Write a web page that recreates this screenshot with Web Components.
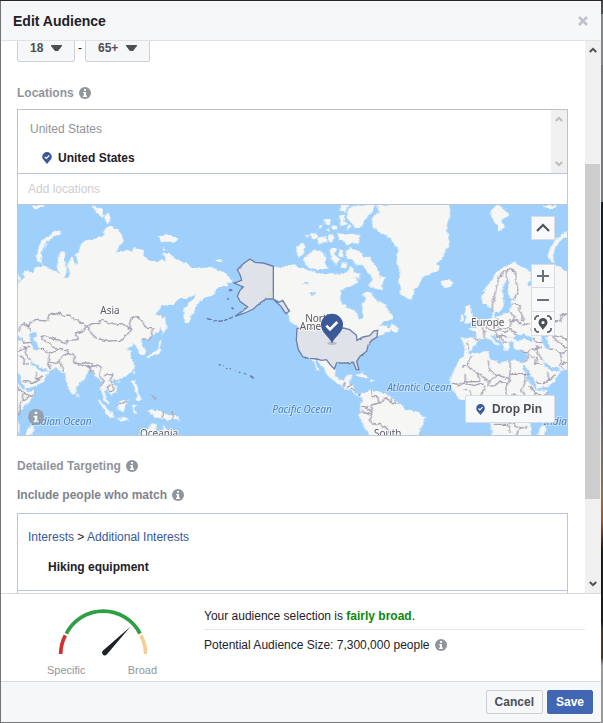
<!DOCTYPE html>
<html lang="en">
<head>
<meta charset="utf-8">
<meta name="viewport" content="width=device-width, initial-scale=1">
<title>Edit Audience</title>
<style>
html, body { margin: 0; height: 100%; }
body {
  box-sizing: border-box;
  padding: 1px 2px 1px 1px;
  font: 12px/16px "Liberation Sans", Arial, sans-serif;
  color: #1d2129;
  background:
    linear-gradient(#2a2528, #2a2528) 0 0 / 100% 1px no-repeat,
    linear-gradient(#737378, #737378) 0 0 / 1px 100% no-repeat,
    linear-gradient(#4b4b50 0 2%, #85868a 2% 9%, #77787b 9% 28%, #141c2e 28% 38%, #4a3d45 50%, #6d6a70 60%, #8a7450 68%, #a8542a 72%, #1a1c1c 76% 86%, #4c3a2c 87% 91%, #98999b 92%) 100% 0 / 2px 100% no-repeat,
    #77787b;
}
</style>
</head>
<body>
<audience-dialog></audience-dialog>
<script>
const define = (name, html, init) => customElements.define(name, class extends HTMLElement {
  constructor() {
    super();
    this.attachShadow({ mode: "open" }).innerHTML = html;
    if (init) init.call(this, this.shadowRoot);
  }
});

define("info-icon", `
<style>:host{display:inline-flex;width:12px;height:12px;flex:none}svg{width:100%;height:100%}</style>
<svg viewBox="0 0 12 12" role="img" aria-label="More information"><circle cx="6" cy="6" r="6" fill="#90949c"/><path d="M5 2h2v1.8H5zM4.2 5H7v3.6h.9V10H4.1V8.600H5V6.300h-.8z" fill="#fff"/></svg>`);

define("pin-icon", `
<style>:host{display:inline-flex;width:10px;height:12px;flex:none}svg{width:100%;height:100%}</style>
<svg viewBox="0 0 10 12" aria-hidden="true"><path d="M5 0a4.800 4.800 0 0 1 4.800 4.800C9.800 7.500 7 9.300 5 12 3 9.300.2 7.500.2 4.800A4.800 4.800 0 0 1 5 0z" fill="#3b5998"/><path d="M2.800 4.900l1.600 1.500L7.300 3.400" fill="none" stroke="#fff" stroke-width="1.300"/></svg>`);

define("section-title", `
<style>
:host{display:flex;align-items:center;gap:5px;height:16px;font-weight:bold;color:var(--tone,#90949c)}
h3{font:inherit;margin:0}
</style><h3><slot></slot></h3><info-icon></info-icon>`);

define("age-select", `
<style>
:host{display:grid;position:relative}
select{appearance:none;height:24px;box-sizing:border-box;border:1px solid #ced0d4;border-radius:2px;background:#f6f7f9;color:#4b4f56;font:bold 12px/16px "Liberation Sans",Arial,sans-serif;padding:0 30px 4px 12px;width:100%}
svg{position:absolute;right:13px;bottom:11px;width:11px;height:6px;pointer-events:none}
</style>
<select></select><svg viewBox="0 0 11 6" aria-hidden="true"><path d="M0 0h11v1L7 6H4L0 1z" fill="#4b4f56"/></svg>`,
function (root) {
  const s = root.querySelector("select");
  s.setAttribute("aria-label", this.getAttribute("label"));
  s.add(new Option(this.getAttribute("value")));
});

define("scroll-track", `
<style>
:host{display:grid;grid-template-rows:18px 1fr 18px;width:16px;background:#f0f0f0;color:#505050}
svg{width:8px;height:6px;place-self:center}
.rail{display:grid;grid-template-rows:var(--rail,1fr)}
.thumb{grid-row:2;background:#cdcdcd;margin-right:1px}
</style>
<svg viewBox="0 0 8 6"><path d="M.8 5L4 1.800 7.200 5" fill="none" stroke="currentColor" stroke-width="2"/></svg>
<div class="rail"></div>
<svg viewBox="0 0 8 6"><path d="M.8 1L4 4.200 7.200 1" fill="none" stroke="currentColor" stroke-width="2"/></svg>`,
function (root) {
  if (this.hasAttribute("thumb")) root.querySelector(".rail").innerHTML = '<div class="thumb"></div>';
});

define("location-picker", `
<style>
:host{display:block;border:1px solid #bdc7dc}
.list{display:grid;grid-template-columns:1fr 16px;height:63px;outline:1px solid #bfc1c6}
.items{display:grid;grid-template-rows:16px 16px;gap:13px;padding:11px 12px 0;align-content:start}
.group{color:#90949c}
.item{display:flex;align-items:center;gap:6px;padding-left:12px;font-weight:bold}
scroll-track{color:#bcbcbc}
input{display:block;box-sizing:border-box;width:100%;height:30px;border:0;padding:0 10px;font:inherit;color:#1d2129;background:#fff;outline:0}
input::placeholder{color:#ccced2;opacity:1}
.field{position:relative;border-top:1px solid #b9c4dc;border-bottom:1px solid #b9c4dc}
</style>
<div class="list"><div class="items"><div class="group">United States</div><div class="item"><pin-icon></pin-icon>United States</div></div><scroll-track></scroll-track></div>
<div class="field"><input type="text" aria-label="Add locations" placeholder="Add locations"></div>
<world-map></world-map>`);

define("world-map", `
<style>
:host{display:block;position:relative;height:230px;overflow:hidden;background:#9fd0fc}
.map{display:block;width:100%;height:100%}
path.land{fill:#f6f6f4}
path.water{fill:#9fd0fc}
path.line{fill:none;stroke:#a5a2b5;stroke-width:4;stroke-linejoin:round}
path.us{fill:#dfe3e9;stroke:#6c7fab;stroke-width:4}
path.isle{fill:#6c7fab;stroke:#6c7fab;stroke-width:3}
path.green{fill:#d6e6d2}
text{font-family:"Noto Sans",sans-serif;font-size:30px;fill:#5c5c6b;stroke:#f8f8f6;stroke-width:6px;paint-order:stroke;text-anchor:middle}
.sea{font-style:italic;fill:#4a83bf;stroke:#c4e1fc}
.tools{position:absolute;top:11px;right:12px;display:grid;grid-template-columns:24px}
button{box-sizing:border-box;height:24px;padding:0;border:1px solid #d9dde3;background:#f8f9fb;color:#4b4f56;display:grid;place-items:center}
.tools button:first-child{margin-bottom:24px}
.tools button:nth-child(n+3){border-top:0}
.tools svg{width:18px;height:18px;fill:none;stroke:currentColor;stroke-width:2}
.tools .step{color:#6c7077}
.drop{position:absolute;right:12px;bottom:12px;height:28px;display:flex;align-items:center;gap:7px;padding:0 12px 0 10px;border-radius:2px;font:bold 12px/16px "Liberation Sans",Arial,sans-serif}
.drop pin-icon{width:9px;height:11px}
.about{position:absolute;left:10px;bottom:10px;width:16px;height:16px;opacity:.8}
.about info-icon{width:16px;height:16px}
</style>
<svg class="map" viewBox="9 6 1647 690" preserveAspectRatio="xMidYMid slice" role="img" aria-label="World map with the United States selected">
<defs>
<filter id="coast" filterUnits="userSpaceOnUse" x="-20" y="-20" width="1720" height="740" color-interpolation-filters="sRGB">
<feTurbulence type="fractalNoise" baseFrequency=".055" numOctaves="3" seed="4"/>
<feDisplacementMap in="SourceGraphic" scale="14" xChannelSelector="R" yChannelSelector="G"/>
</filter>
<filter id="calm" filterUnits="userSpaceOnUse" x="-20" y="-20" width="1720" height="740" color-interpolation-filters="sRGB">
<feTurbulence type="fractalNoise" baseFrequency=".055" numOctaves="2" seed="4"/>
<feDisplacementMap in="SourceGraphic" scale="6" xChannelSelector="R" yChannelSelector="G"/>
</filter>
<g id="old">
<path class="land" d="M-136 290L-131 262-113 240-96 215-76 195-56 183-36 180-23 188-2 196 10 206 14 232-2 240 8 248 16 234 30 222 22 208 40 200 50 208 70 192 85 186 100 195 122 205 132 212 126 195 128 175 131 150 142 143 150 152 149 172 156 190 153 215 146 230 160 224 165 208 158 190 163 170 172 160 178 176 184 186 188 172 182 156 190 144 192 130 215 112 245 106 262 98 276 72 290 68 300 78 324 92 325 112 312 130 306 146 318 148 336 140 352 146 358 134 372 138 390 142 388 160 400 174 418 170 424 178 440 170 452 172 450 160 436 152 465 152 478 166 500 178 515 180 530 195 565 194 570 188 595 195 620 205 640 220 652 230 648 240 636 238 640 252 615 252 605 262 595 276 570 284 558 296 552 292 540 320 530 336 525 350 510 358 505 345 508 318 520 302 538 284 540 274 525 280 515 288 490 288 476 304 440 308 432 322 420 334 440 340 442 360 434 382 415 398 400 412 378 410 385 430 394 444 384 458 374 452 372 440 362 430 356 420 348 432 340 430 334 442 350 446 344 460 358 476 360 490 352 504 340 516 320 524 310 530 296 526 292 534 306 552 304 566 290 578 284 570 276 560 268 566 276 586 284 600 278 604 266 586 258 560 258 535 246 522 236 514 226 504 215 510 208 530 194 542 184 558 180 576 172 578 160 555 152 528 150 508 138 510 125 496 100 500 98 512 84 536 60 550 30 558 36 564 62 560 56 576 42 596 18 620 8 640 8 660 14 662 12 700-106 700-106 670-118 640-128 610-160 600-200 592-218 570-231 545-229 520-211 482-192 458-185 447-190 425-196 405-180 403-150 404-156 390-176 376-150 372-140 362-120 350-106 345-103 325-98 330-100 318-112 312-130 302z"/>
<path class="land" d="M-110 20L-88 8-60 22-56 38-76 50-66 72-82 86-94 62-106 46zM-259 235L-240 230-220 236-224 250-246 256-256 246zM-186 310L-172 304-168 330-160 350-176 362-188 360-178 346-186 330zM-200 335L-190 330-189 350-202 354z"/>
<path class="land" d="M132 82L110 92 88 106 70 130 62 160 68 174 82 182 78 158 84 140 96 118 112 104 136 94zM232 6L258 16 268 34 262 44 240 26zM266 40L278 32 290 50 276 60zM46 8L90 6 84 14 62 16zM428 100L450 96 490 106 482 116 440 116zM440 132L456 138 446 144zM600 172L618 168 620 176 604 178z"/>
<path class="land" d="M436 345L450 340 454 375 444 400 440 380zM442 408L434 432 440 446 416 456 402 466 396 462 416 446 430 436 432 416zM358 502L360 516 354 512zM306 532L314 534 308 540zM352 534L362 532 366 552 374 570 380 592 364 590 368 574 356 560zM246 588L262 600 286 624 296 640 288 642 266 622zM300 642L330 646 344 652 322 654zM306 604L324 590 340 588 336 604 326 624 308 622zM350 608L370 606 356 614 362 634 352 630zM394 622L412 620 440 624 452 634 482 636 494 654 476 650 454 652 430 644 414 638zM380 690L400 674 410 664 426 668 422 682 440 690 446 664 456 690 458 700 370 700zM184 568L190 580 184 584zM30 700L36 680 50 660 56 672 50 700z"/>
<path class="water" d="M-173 447L-156 432-143 412-123 403-111 408-99 422-86 432-83 425-101 405-106 395-96 398-76 418-66 440-56 445-51 430-56 420-41 415-41 430-36 440-1 445-1 460-11 478-51 470-86 480-111 465-116 447-173 452zM-41 410L-33 392-14 398-8 390 4 400 18 404 14 414-10 408-32 414zM42 392L64 386 66 398 54 406 66 424 72 438 56 440 46 420zM-15 482L-7 484 10 512 30 554 26 562 10 542-4 512zM46 468L56 478 74 492 100 498 84 504 68 500 56 490zM-97 330L-86 330-76 320-69 285-76 262-66 240-58 235-52 240-58 265-54 283-28 288-50 293-46 310-56 328-76 338-96 342z"/>
<path class="line" d="M-108 322L-100 290-92 250-82 220-66 204-50 200M-60 236L-62 210-50 196-38 204-32 240-26 270-40 286M-44 300L-20 306-22 324-10 340-14 352-40 354-56 350M-50 328L-38 340-44 354M-118 348L-122 372-100 384-76 376-52 374-46 354M-88 345L-86 374M-138 370L-126 384-130 404M-180 412L-176 440M-160 405L-145 412M-100 384L-90 400-72 396-60 404-40 404M-84 384L-66 388-50 380-34 386M-80 396L-74 416-60 418M-34 356L-10 366 8 362M-40 386L-34 394M12 384L16 368 30 362 42 370M40 372L48 356 70 352 100 354 104 336 134 330 150 338 166 336 178 350 206 364 216 372 204 384 182 390 186 410 158 412 148 422 130 412 110 406 90 396 78 404 98 420 126 438M40 372L46 386M216 372L230 362 252 362 256 350 280 358 304 364 332 366 350 380 330 400 318 412 280 414 244 406 230 392 216 372M340 378L348 346 368 340 382 356 394 374 414 374 412 398 398 412 382 410M70 438L86 440 100 450 128 440 158 440 160 452 178 458 176 476 198 486 226 492 248 486 260 494 254 516M100 450L104 470 98 486 110 496M104 482L134 476 146 456 160 450M134 476L142 492 140 506M176 476L200 480 232 480 226 512M216 486L232 500 240 514M254 516L262 530 260 552M268 520L278 512 294 518 284 530 296 552 290 568 276 556 286 544M20 404L30 420 46 418M26 432L44 434M10 440L34 436 30 450 46 470M10 456L28 466 26 484 46 482M26 534L48 542 66 530 84 518M66 530L62 508M-18 444L2 446 10 440M-6 476L4 456 2 446M8 552L24 570 20 594 44 580M16 596L14 636M-170 458L-180 488-192 488-192 496M-180 488L-150 510-142 532-184 534M-185 512L-186 540M-150 510L-112 536-90 514-112 504-116 470M-112 536L-120 550-96 548-84 534-60 538-58 550M-90 514L-52 528-50 470M-52 514L8 514M-52 528L-64 556-58 576-30 576M-12 514L-2 530-16 560-4 580M-208 550L-190 540-160 548-130 540M-190 560L-170 560-166 584M-226 540L-206 545M-130 548L-136 590M24 570L50 580 62 566M-100 664L-60 664-50 690M-60 664L-40 660-20 680-34 696M-20 680L0 670M442 624L442 644M306 606L322 602 338 590M474 622L474 652M412 574L420 590"/>
</g>
</defs>
<g filter="url(#coast)">
<use href="#old"/><use href="#old" x="1536"/>
<path class="land" d="M775 190L800 196 818 190 836 184 852 194 884 200 915 215 940 212 955 216 985 210 1002 200 1006 188 1016 198 1015 225 1028 238 1010 250 990 254 976 270 976 295 995 314 1022 324 1034 352 1044 340 1042 305 1052 290 1042 272 1056 264 1070 270 1084 296 1100 292 1115 315 1135 340 1134 352 1112 354 1092 370 1118 364 1114 374 1134 378 1096 396 1080 400 1030 425 900 425 860 400 846 376 832 356 820 336 800 296 775 288z"/>
<path class="land" d="M888 465L905 462 940 465 958 496 960 515 975 530 990 530 995 518 1010 518 1002 536 1004 546 1016 548 1018 570 1035 574 1050 570 1062 560 1085 564 1115 575 1145 590 1155 605 1170 618 1205 625 1230 645 1220 670 1208 700 1066 700 1050 670 1030 640 1036 612 1044 590 1036 582 1020 576 1000 558 965 540 940 520 922 488 905 468 898 476 910 500 904 504z"/>
<path class="land" d="M1083 6L1094 26 1070 45 1074 80 1100 90 1125 105 1150 140 1144 180 1156 200 1150 240 1160 275 1180 288 1194 290 1198 262 1225 225 1248 210 1262 206 1276 196 1264 180 1282 170 1292 140 1304 120 1296 80 1306 40 1302 0zM1122 380L1130 362 1140 366 1152 380 1144 386zM1018 516L1040 512 1062 526 1044 524zM1064 530L1084 532 1070 538zM1040 506L1046 510 1040 512z"/>
<path class="land" d="M995 142L1008 134 1030 140 1044 160 1062 164 1084 190 1092 215 1112 226 1100 240 1104 262 1080 256 1060 250 1064 240 1074 228 1058 210 1040 186 1020 184 1010 168 996 172zM846 128L862 122 872 132 866 152 850 166 842 148zM866 166L884 150 900 138 920 146 936 166 930 180 940 196 910 202 890 196 872 186zM1002 14L1050 6 1080 6 1072 30 1046 50 1036 74 1020 76 1010 56 994 46zM966 90L990 94 1014 92 1036 100 1030 120 996 124 976 110zM944 140L962 136 960 156 976 172 964 184 948 166zM970 138L986 142 984 164 972 158zM976 180L996 178 994 196 980 194zM880 96L900 86 908 102 892 108zM870 100L878 94 880 108zM906 104L930 100 936 120 910 122zM940 96L956 100 952 118 938 112zM926 52L948 50 944 64 928 64zM950 66L968 70 964 82 950 78zM932 78L944 76 944 88zM972 38L990 34 984 54 996 62 980 70zM978 6L1000 6 990 30 976 24zM1000 60L1010 74 996 80zM1014 206L1036 212 1030 230 1014 226zM914 66L922 72 912 78z"/>
<path class="water" d="M858 242L880 238 876 246zM880 272L900 266 896 276z"/>
<path class="line" d="M1066 560L1070 580 1088 582 1092 600 1072 606 1070 634 1042 624 1034 630M1092 600L1112 584 1124 596 1152 604M1128 584L1130 602M1142 588L1140 604M1070 634L1060 650 1082 668 1096 660 1120 682 1124 696M1040 612L1056 616 1070 628M984 548L990 534M996 552L1012 548M1006 558L1018 562M1028 576L1036 574"/>
</g>
<g filter="url(#calm)">
<path class="us" d="M705 168L720 178 745 180 775 190 775 288 753 288 735 300 715 318 690 330 660 340 680 326 698 312 675 295 667 280 675 262 685 252 657 240 680 232 675 215 667 200 685 182zM775 288L792 298 803 292 823 325 812 332 798 310 784 298zM846 376L985 375 1004 380 1016 390 1024 396 1026 412 1044 402 1064 398 1076 384 1088 382 1086 402 1070 412 1060 425 1055 445 1035 460 1025 475 1032 500 1024 500 1015 478 995 480 965 480 958 498 948 488 934 470 920 472 905 468 886 466 864 462 850 440 844 412z"/>
<path class="isle" d="M576 346L590 350 576 348zM596 352L606 353 596 354zM610 354L624 353 612 356zM628 351L638 349 628 353zM642 346L654 342 643 348zM646 258L652 262 646 264zM638 286L642 288 638 289zM650 312L656 318 652 318zM613 484L617 486 613 487zM626 487L628 488 626 489zM634 496L637 497 634 498zM645 496L648 498 645 498zM660 500L663 502 660 503zM672 507L676 508 672 509zM688 510L692 513 688 513zM704 517L711 520 716 526 709 524z"/>
<path class="green" d="M756 268L772 270 772 286 758 280zM1090 212L1100 218 1096 228zM866 384L880 382 878 388zM884 400L894 398 890 406z"/>
</g>
<text x="285" y="333">Asia</text><text x="1418" y="368">Europe</text>
<text x="912" y="356">North</text><text x="912" y="380">America</text>
<text x="432" y="702">Oceania</text><text x="1118" y="702">South</text>
<text class="sea" x="140" y="666">Indian Ocean</text><text class="sea" x="1676" y="666">Indian Ocean</text><text class="sea" x="861" y="629">Pacific Ocean</text><text class="sea" x="1213" y="564">Atlantic Ocean</text>
<ellipse cx="951" cy="421" rx="14" ry="5" fill="#8d93a5" opacity=".5"/>
<path d="M951 332a33 33 0 0 1 33 33c0 24-24 34-33 56-9-22-33-32-33-56a33 33 0 0 1 33-33z" fill="#3b5998"/>
<path d="M934 368l11 11 22-22" fill="none" stroke="#fff" stroke-width="8"/>
</svg>
<div class="tools">
<button aria-label="Collapse map"><svg viewBox="0 0 18 18"><path d="M3 12l6-6 6 6"/></svg></button>
<button class="step" aria-label="Zoom in"><svg viewBox="0 0 18 18"><path d="M9 3v12M3 9h12"/></svg></button>
<button class="step" aria-label="Zoom out"><svg viewBox="0 0 18 18"><path d="M3 9h12"/></svg></button>
<button aria-label="Fit to pins"><svg viewBox="0 0 18 18"><path d="M1 5V3l2-2h2M13 1h2l2 2v2M17 13v2l-2 2h-2M5 17H3l-2-2v-2" stroke-width="1.500"/><path d="M9 3a4.500 4.500 0 0 1 4.500 4.500C13.500 10.500 10.500 12 9 15 7.500 12 4.500 10.500 4.500 7.500A4.500 4.500 0 0 1 9 3zm0 3a1.600 1.600 0 1 0 0 3.200A1.600 1.600 0 0 0 9 6z" fill="currentColor" fill-rule="evenodd" stroke="none"/></svg></button>
</div>
<button class="drop"><pin-icon></pin-icon>Drop Pin</button>
<div class="about"><info-icon></info-icon></div>`);

define("targeting-box", `
<style>
:host{display:block;border:1px solid #b9c4dc;border-bottom:0}
.entry{display:grid;gap:14px;padding:15px 10px}
a{color:#365899;text-decoration:none}
.name{padding-left:20px;font-weight:bold}
.next{border-top:1px solid #b9c4dc;height:30px}
</style>
<div class="entry"><nav><a href="#interests">Interests</a> &gt; <a href="#additional">Additional Interests</a></nav><div class="name">Hiking equipment</div></div>
<div class="next"></div>`);

define("audience-gauge", `
<style>
:host{display:grid;justify-items:center;gap:2px;width:110px;font-size:11px;line-height:16px;color:#90949c}
svg{width:90px;height:48px}
.ends{display:flex;justify-content:space-between;width:100%}
</style>
<svg viewBox="0 0 270 144" role="img" aria-label="Audience is fairly broad">
<g fill="none" stroke-width="11"><path d="M11 138A124 124 0 0 1 25 82" stroke="#d0302f"/><path d="M28 77A124 124 0 0 1 249 77" stroke="#2f9e44"/><path d="M252 82A124 124 0 0 1 266 138" stroke="#f7cd94"/></g>
<path d="M220 56L150 139Q143 146 137 139 132 132 140 126z" fill="#1d2129"/>
</svg>
<div class="ends"><span>Specific</span><span>Broad</span></div>`);

define("audience-summary", `
<style>
:host{display:grid;grid-template-columns:110px 1fr;column-gap:47px;box-sizing:border-box;padding:14px 16px 0 46px;border-top:1px solid #d8dade;height:88px}
.text{display:grid;align-content:start;grid-template-rows:22px 30px}
.text div{display:flex;align-items:center;gap:5px}
.text div:first-child{border-bottom:1px solid #e5e6e9;align-items:flex-start}
b{color:#0a8a0a}
p{margin:0}
</style>
<audience-gauge></audience-gauge>
<div class="text"><div><p>Your audience selection is <b>fairly broad</b>.</p></div><div><p>Potential Audience Size: 7,300,000 people</p><info-icon></info-icon></div></div>`);

define("dialog-button", `
<style>
:host{display:block}
button{height:24px;box-sizing:border-box;border:1px solid #ced0d4;border-radius:2px;background:#f6f7f9;color:#4b4f56;padding:0 8px;font:bold 12px/22px "Liberation Sans",Arial,sans-serif}
:host([primary]) button{background:#4267b2;border-color:#4267b2;color:#fff}
</style><button type="button"><slot></slot></button>`);

define("audience-dialog", `
<style>
:host{display:grid;grid-template-rows:40px 1fr auto 41px;height:100%;min-height:0;background:#fff}
header,footer{display:flex;align-items:center;background:#f6f7f9;box-sizing:border-box}
header{justify-content:space-between;border-bottom:1px solid #e1e2e5;padding:0 12px}
h2{margin:0;font-size:14px;line-height:18px}
.close{border:0;padding:0;background:none;width:12px;height:12px}
.close svg{display:block;width:12px;height:12px}
footer{justify-content:flex-end;gap:4px;border-top:1px solid #d8dade;padding:0 8px}
.body{display:grid;grid-template-columns:minmax(0,1fr) 16px;min-height:0;overflow:hidden}
.content{padding:0 17px 0 16px;overflow:hidden;min-height:0}
.ages{display:flex;align-items:flex-end;gap:3px;height:21px;margin-bottom:23px}
.ages span{padding-bottom:6px}
location-picker{margin:8px 0 22px}
targeting-box{margin-top:10px}
.include{margin-top:13px;--tone:#7f838b}
.body>scroll-track{--rail:105fr 334fr 76fr}
</style>
<header><h2>Edit Audience</h2><button class="close" aria-label="Close"><svg viewBox="0 0 12 12"><path d="M2 2l8 8M10 2l-8 8" stroke="#bec3c9" stroke-width="2.500"/></svg></button></header>
<div class="body"><div class="content">
<div class="ages"><age-select label="Minimum age" value="18"></age-select><span>-</span><age-select label="Maximum age" value="65+"></age-select></div>
<section-title>Locations</section-title>
<location-picker></location-picker>
<section-title>Detailed Targeting</section-title>
<section-title class="include">Include people who match</section-title>
<targeting-box></targeting-box>
</div><scroll-track thumb></scroll-track></div>
<audience-summary></audience-summary>
<footer><dialog-button>Cancel</dialog-button><dialog-button primary>Save</dialog-button></footer>`);
</script>
</body>
</html>
